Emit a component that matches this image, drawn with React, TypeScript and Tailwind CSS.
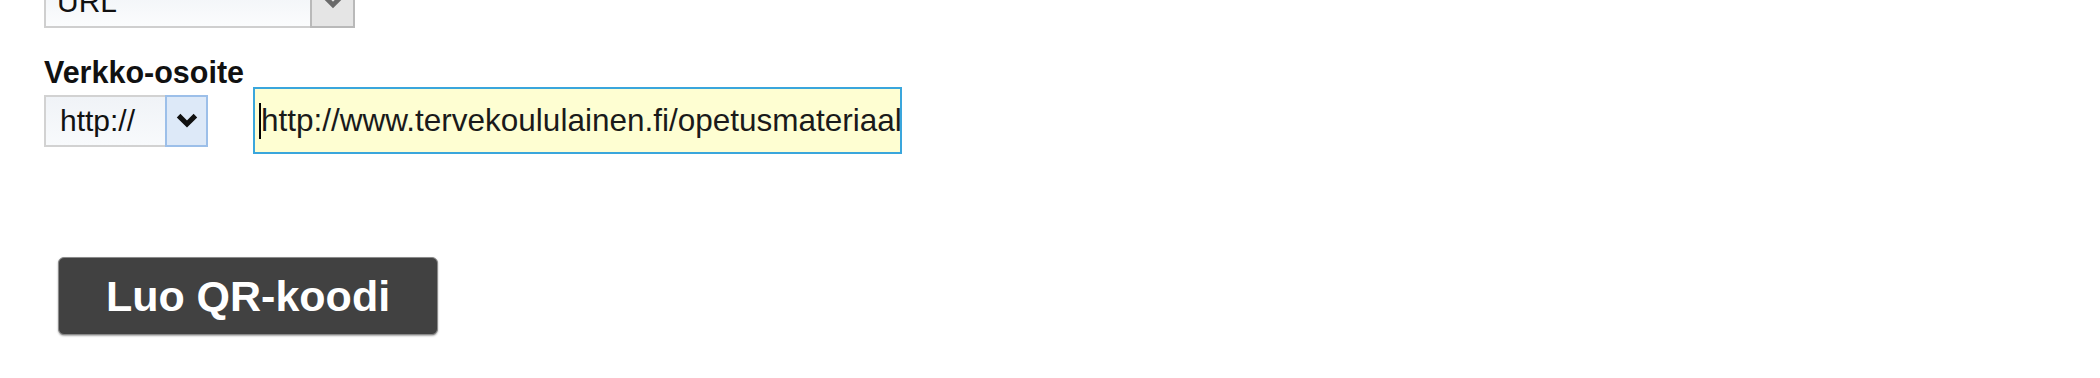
import React from 'react';

function Chevron({ color, size = 24 }: { color: string; size?: number }) {
  return (
    <svg width={size} height={size * 0.7} viewBox="0 0 20 14">
      <path d="M3 3 L10 10 L17 3" fill="none" stroke={color} strokeWidth="4.2" strokeLinejoin="miter" />
    </svg>
  );
}

export default function App() {
  return (
    <div className="w-[2100px] h-[378px] bg-white overflow-hidden pl-[44px] font-['Liberation_Sans',Arial,sans-serif] text-[#111]">
      {/* type select, cut off at the top */}
      <div className="mt-[-24px] w-[311px] h-[52px] flex border-2 border-[#cfcfcf] bg-gradient-to-b from-[#eef2f6] to-[#fbfcfd]">
        <div className="flex-1 pl-[11px] flex items-center text-[30px] leading-none">URL</div>
        <div className="w-[45px] flex items-center justify-center bg-[#e5e5e5] border-2 border-[#b9b9b9] -m-[2px] ml-0">
          <Chevron color="#6a6a6a" size={22} />
        </div>
      </div>

      <div className="mt-[28px] text-[30.5px] leading-[33px] font-bold">Verkko-osoite</div>

      <div className="mt-[-2px] flex items-center gap-[45px]">
        <div className="w-[164px] h-[52px] flex border-2 border-[#d2d2d2] bg-gradient-to-b from-[#f0f3f7] to-[#f8fafc]">
          <div className="flex-1 pl-[14px] flex items-center text-[30px] leading-none">http://</div>
          <div className="w-[43px] flex items-center justify-center bg-[#dde9f8] border-2 border-[#9cbfe9] -m-[2px] ml-0">
            <Chevron color="#111" />
          </div>
        </div>

        <div className="w-[649px] h-[67px] border-2 border-[#3aa6dc] bg-[#fefed2] flex items-center pl-[4px] overflow-hidden">
          <span className="w-[2px] h-[36px] bg-black shrink-0" />
          <span className="text-[31.5px] leading-none whitespace-nowrap text-[#1a1a1a]">
            http://www.tervekoululainen.fi/opetusmateriaal
          </span>
        </div>
      </div>

      <button className="mt-[103px] ml-[14px] w-[380px] h-[78px] rounded-[6px] bg-[#414141] border border-[#8a8a8a] shadow-[0_1px_2px_rgba(0,0,0,0.35)] text-white font-bold text-[43px] leading-none flex items-center justify-center">
        Luo QR-koodi
      </button>
    </div>
  );
}
